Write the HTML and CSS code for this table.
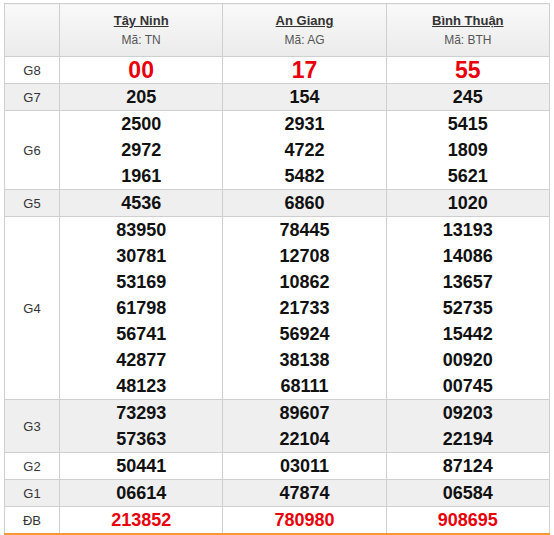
FILE: index.html
```html
<!DOCTYPE html>
<html lang="vi">
<head>
<meta charset="utf-8">
<title>Kết quả xổ số</title>
<link rel="stylesheet" href="styles.css">
</head>
<body>
<table class="kq">
  <colgroup><col class="c-label"><col><col><col></colgroup>
  <thead>
    <tr>
      <th class="lbl"></th>
      <th><a class="prov" href="#">Tây Ninh</a><div class="code">Mã: TN</div></th>
      <th><a class="prov" href="#">An Giang</a><div class="code">Mã: AG</div></th>
      <th><a class="prov" href="#">Bình Thuận</a><div class="code">Mã: BTH</div></th>
    </tr>
  </thead>
  <tbody>
    <tr><td class="lbl">G8</td><td class="g8"><div>00</div></td><td class="g8"><div>17</div></td><td class="g8"><div>55</div></td></tr>
    <tr class="alt"><td class="lbl">G7</td><td><div>205</div></td><td><div>154</div></td><td><div>245</div></td></tr>
    <tr><td class="lbl">G6</td>
      <td><div>2500</div><div>2972</div><div>1961</div></td>
      <td><div>2931</div><div>4722</div><div>5482</div></td>
      <td><div>5415</div><div>1809</div><div>5621</div></td></tr>
    <tr class="alt"><td class="lbl">G5</td><td><div>4536</div></td><td><div>6860</div></td><td><div>1020</div></td></tr>
    <tr><td class="lbl">G4</td>
      <td><div>83950</div><div>30781</div><div>53169</div><div>61798</div><div>56741</div><div>42877</div><div>48123</div></td>
      <td><div>78445</div><div>12708</div><div>10862</div><div>21733</div><div>56924</div><div>38138</div><div>68111</div></td>
      <td><div>13193</div><div>14086</div><div>13657</div><div>52735</div><div>15442</div><div>00920</div><div>00745</div></td></tr>
    <tr class="alt"><td class="lbl">G3</td>
      <td><div>73293</div><div>57363</div></td>
      <td><div>89607</div><div>22104</div></td>
      <td><div>09203</div><div>22194</div></td></tr>
    <tr><td class="lbl">G2</td><td><div>50441</div></td><td><div>03011</div></td><td><div>87124</div></td></tr>
    <tr class="alt"><td class="lbl">G1</td><td><div>06614</div></td><td><div>47874</div></td><td><div>06584</div></td></tr>
    <tr class="db"><td class="lbl">ĐB</td><td class="red"><div>213852</div></td><td class="red"><div>780980</div></td><td class="red"><div>908695</div></td></tr>
  </tbody>
</table>
</body>
</html>
```

FILE: styles.css
```css
html, body { margin: 0; padding: 0; background: #fff; }
body { padding: 3px 4px 0; font-family: "Liberation Sans", Arial, sans-serif; }

.kq {
  width: 100%;
  border-collapse: collapse;
  table-layout: fixed;
  border: 1px solid #cfcfcf;
}
.c-label { width: 55px; }

.kq th, .kq td {
  border: 1px solid #cfcfcf;
  padding: 0;
  text-align: center;
  vertical-align: middle;
}

.kq thead th {
  padding: 8px 0 7px;
  vertical-align: top;
  background: linear-gradient(#f9f9f9, #ebebeb);
  font-weight: normal;
}
.prov {
  display: block;
  width: max-content;
  margin: 0 auto;
  font-size: 13px;
  line-height: 18px;
  font-weight: bold;
  color: #333;
  text-decoration: underline;
}
.code {
  margin-top: 1px;
  font-size: 12px;
  line-height: 18px;
  color: #555;
}

.kq td {
  font-size: 18px;
  font-weight: bold;
  color: #111;
}
.kq td div { line-height: 26px; }

.kq td.lbl {
  font-size: 13px;
  font-weight: normal;
  color: #333;
}

.kq td.g8 { font-size: 23px; color: #e8000a; }
.kq td.red { color: #e8000a; }

.alt td { background: #efefef; }

.db td { border-bottom: 2px solid #f39a37; }
```
